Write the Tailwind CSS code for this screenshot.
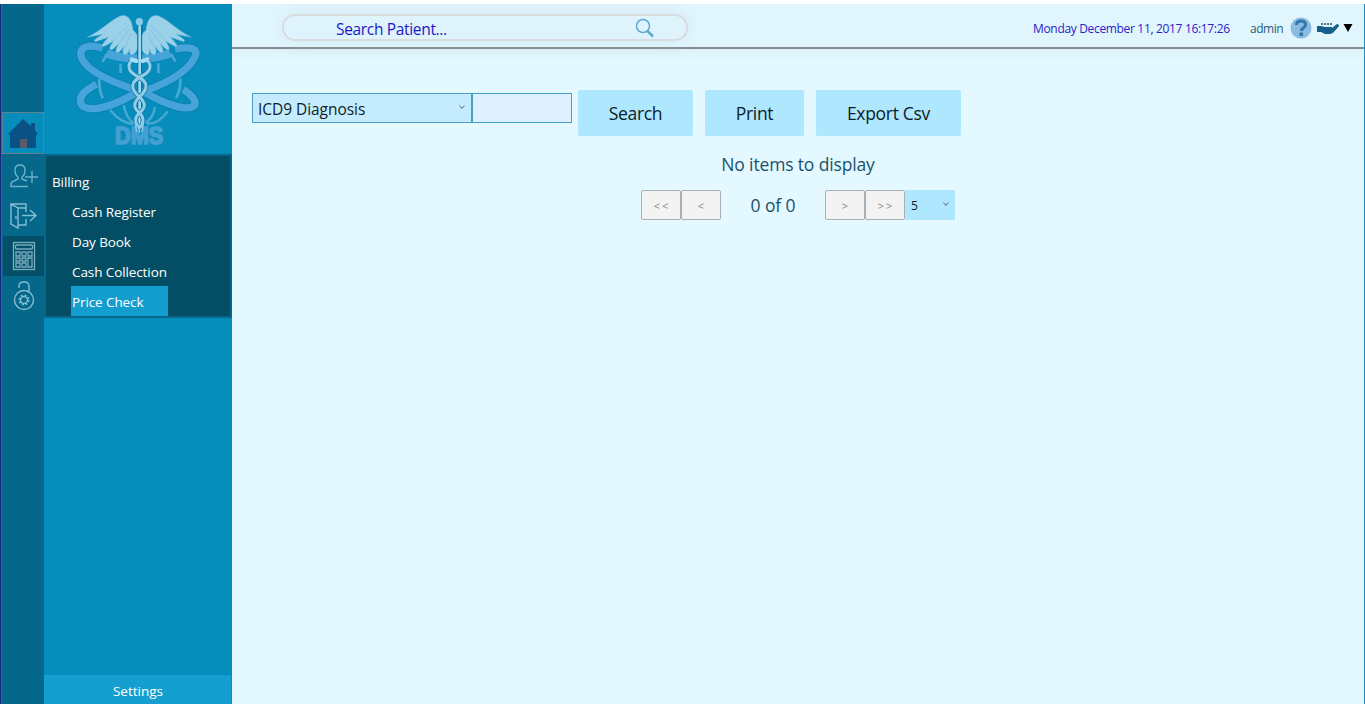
<!DOCTYPE html>
<html lang="en">
<head>
<meta charset="utf-8">
<title>DMS - Price Check</title>
<script src="https://cdn.jsdelivr.net/npm/@tailwindcss/browser@4"></script>
</head>
<body class="h-[704px] w-[1365px] overflow-hidden bg-white pt-1 font-['Open_Sans','Noto_Sans',sans-serif]">
<div class="flex h-[700px] border-l border-[#10297c]">
  <nav class="flex w-[43px] shrink-0 flex-col border-l border-[#0a7ba3] bg-[#056789] pt-[108px]">
    <a class="flex h-[42px] w-[42px] items-center justify-center border border-[#657f8c] bg-[#078dbc]">
      <svg class="h-8 w-8" viewBox="0 0 32 32"><path d="M1 17 16 2l8 7V6h4v7l3 4-2 1v13H3V18Z" fill="#0a5285"/><rect x="13" y="22" width="7" height="9" fill="#5b5c6b"/></svg>
    </a>
    <a class="flex h-[41px] items-center justify-center pt-1 pl-0.5">
      <svg class="h-7 w-8" viewBox="0 0 32 28" fill="none" stroke="#6fb0cc" stroke-width="1.4"><path d="M20 23.500H3v-2.500q0-2 3-3l4-2v-2Q7 12 7 7q0-5 5-5t5 5q0 5-3 7v2l5 2M24 8v12M17 14h13"/></svg>
    </a>
    <a class="flex h-[41px] items-center justify-center pl-0.5">
      <svg class="h-7 w-8" viewBox="0 0 32 28" fill="none" stroke="#83bdd3" stroke-width="1.4"><path d="M3 2h15v8M3 2l7 4v20l-7-4ZM10 6h8M18 2v8M10 23h8v-6M8 14v3M14 13.500h14M22 8l6 5.500-6 5.500"/></svg>
    </a>
    <a class="ml-px flex h-10 items-center justify-center bg-[#044f68]">
      <svg class="h-[30px] w-6" viewBox="0 0 24 30" fill="none" stroke="#78acbf" stroke-width="1.3"><rect x="1.500" y="1.500" width="21" height="27"/><rect x="3.500" y="4" width="17" height="4" rx="1"/><path d="M4 11h4v4H4zm6 0h4v4h-4zm6 0h4v4h-4zM4 17h4v3H4zm6 0h4v3h-4zm6 0h4v9h-4zM4 22h4v4H4zm6 0h4v4h-4z"/></svg>
    </a>
    <a class="flex h-10 items-center justify-center">
      <svg class="h-8 w-8" viewBox="0 0 32 32" fill="none" stroke="#83bdd3" stroke-width="1.4"><circle cx="17" cy="20" r="9.500"/><circle cx="17" cy="20" r="3.500"/><circle cx="17" cy="20" r="4.800" stroke-width="1.600" stroke-dasharray="1.885 1.885"/><path d="M12 8V6q0-4 5-4t5 4v6"/></svg>
    </a>
  </nav>
  <aside class="flex w-[188px] shrink-0 flex-col bg-[#078dbc]">
    <div class="h-[150px]">
      <svg class="h-[150px] w-[188px]" viewBox="132 12 564 450" fill="none">
        <g stroke="#08749f" stroke-width="28" opacity=".45">
          <path d="M308 144C260 130 230 142 247 178C264 211 325 242 398 266M435 278C500 315 560 333 580 319C594 309 581 290 550 268M525 147C570 139 598 144 584 172C561 222 485 259 391 288C316 330 254 337 242 310C235 287 257 270 289 253"/>
        </g>
        <g stroke="#46a4da" stroke-width="22">
          <path d="M308 144C260 130 230 142 247 178C264 211 325 242 398 266M435 278C500 315 560 333 580 319C594 309 581 290 550 268"/>
          <path d="M525 147C570 139 598 144 584 172C561 222 485 259 391 288C316 330 254 337 242 310C235 287 257 270 289 253"/>
          <path d="M320 161Q422 191 511 160" stroke-width="25"/>
        </g>
        <g stroke="#49a9d4" stroke-width="7">
          <path d="M321 161l-13 25M362 191v28M475 190v30M512 161l15 24M298 237q-2 30 10 58M541 236q2 30-13 58" stroke-width="8"/>
          <path d="M331 330q30 39 69 42M371 316q7 39 34 57M503 334q-26 37-62 38M465 321q-6 35-29 48"/>
        </g>
        <g fill="#9bd0e9" stroke="#69b4d8" stroke-width="1.500">
          <path d="M399 91C395 50 376 39 355 51C326 65 312 86 262 112L308 103C292 114 278 120 286 125L325 112Q302 137 307 139Q312 142 340 123Q324 148 332 149Q338 151 356 131Q341 158 354 158Q362 155 372 138Q363 164 376 164Q387 161 389 146Q386 170 402 162Q417 150 414 119Q413 100 399 91Z"/>
          <path d="M438 91C442 50 461 39 482 51C511 65 525 86 574 112L529 103C545 114 559 120 551 125L512 112Q535 137 530 139Q525 142 497 123Q513 148 505 149Q499 151 481 131Q496 158 483 158Q475 155 465 138Q474 164 461 164Q450 161 448 146Q451 170 435 162Q420 150 423 119Q424 100 438 91Z"/>
        </g>
        <path d="M386 75l-46 44M388 88l-31 41M392 101l-16 40M452 75l45 44M450 88l31 41M446 101l15 40" stroke="#77bcdc" stroke-width="2"/>
        <path d="M419 76v310" stroke="#0878a2" stroke-width="15"/>
        <circle cx="418" cy="65" r="11" fill="#8acbea"/><path d="M419 76v310" stroke="#a1d8ef" stroke-width="8"/>
        <g stroke="#147ba8" stroke-width="14"><path d="M405 180Q386 181 387 202C390 230 438 230 438 257C438 287 404 290 404 316C404 337 429 338 429 359Q429 376 418 383M432 180Q451 181 450 202C447 230 398 230 398 257C398 287 433 290 433 316C433 337 407 338 407 359Q407 376 418 383"/></g>
        <g stroke="#92cde8" stroke-width="9" stroke-linecap="round"><path d="M405 180Q386 181 387 202C390 230 438 230 438 257C438 287 404 290 404 316C404 337 429 338 429 359Q429 376 418 383M432 180Q451 181 450 202C447 230 398 230 398 257C398 287 433 290 433 316C433 337 407 338 407 359Q407 376 418 383"/></g>
        <path d="M395 178l14 5M442 178l-14 5" stroke="#a5dcef" stroke-width="12" stroke-linecap="round"/>
        <text x="345" y="431" textLength="145" lengthAdjust="spacingAndGlyphs" fill="#43a0d3" stroke="#43a0d3" stroke-width="5" class="font-['Liberation_Sans',sans-serif] text-[74px] font-bold">DMS</text>
        <path d="M406 372l4 24M418 375v23M430 372l-4 24" stroke="#8bcbe5" stroke-width="4"/>
      </svg>
    </div>
    <div class="h-[164px] border-2 border-[#056789] bg-[#044e65] pt-[10px] text-[13.5px] leading-[32px] tracking-[-0.1px] text-white">
      <div class="h-[30px] pl-1.5">Billing</div>
      <ul class="pl-[25px]">
        <li class="h-[30px] pl-px">Cash Register</li>
        <li class="h-[30px] pl-px">Day Book</li>
        <li class="h-[30px] pl-px">Cash Collection</li>
        <li class="h-[30px] w-[97px] bg-[#139dcf] pl-px">Price Check</li>
      </ul>
    </div>
    <div class="mt-auto h-[29px] border-r border-[#078dbc] bg-[#149fd0] pl-px text-center text-[13.5px] leading-[33px] text-white">Settings</div>
  </aside>
  <main class="flex-1 overflow-hidden border-r border-[#238bc5] bg-[#e4f8ff]">
    <header class="flex h-[45px] items-center border-b-2 border-[#858b8f] bg-[#e1f5fd] pl-[50px] shadow-[0_2px_12px_#b5cbd044]">
      <div class="mt-1 flex h-[27px] w-[406px] items-center justify-between rounded-[13px] border-2 border-[#d9dcdf] bg-[#def3fc] pr-[31px] pl-[52px] shadow-[0_0_16px_#b9d6df55]">
        <span class="pt-1 text-[15.5px] tracking-[-0.33px] whitespace-nowrap text-[#1c18c5]">Search Patient...</span>
        <svg class="h-5 w-5" viewBox="0 0 20 20" fill="none" stroke="#60a9ce"><circle cx="8" cy="8" r="6.500" stroke-width="1.500"/><path d="m12.500 13 5.500 5.500" stroke-width="2.500"/></svg>
      </div>
      <div class="ml-auto flex items-center pt-1 pr-[11px] whitespace-nowrap">
        <span class="w-[197px] pt-0.5 text-[12px] tracking-[-0.33px] text-[#2c23c8]">Monday December 11, 2017 16:17:26</span>
        <span class="ml-[20px] w-[33px] pt-0.5 text-[12px] tracking-[-0.45px] text-[#245f7b]">admin</span>
        <svg class="ml-[7px] h-[22px] w-[22px]" viewBox="0 0 22 22"><circle cx="11" cy="11" r="10.500" fill="#8bbbe0"/><path d="M6.500 8q0-4 4.500-4t4.500 3.500q0 2-2 3.200Q11.500 12 11.500 14" fill="none" stroke="#3476ae" stroke-width="3"/><rect x="9.500" y="15.500" width="3.500" height="3.500" fill="#3476ae"/></svg>
        <svg class="ml-1 h-4 w-[24px]" viewBox="0 0 24 16"><path d="M1 6h4l4 1h7v1l5-4q2 0 2 2l-6 7-3 1H9l-4-2H1Z" fill="#145f8b"/><path d="M5 4h12" stroke="#477f9d" stroke-width="2" stroke-dasharray="2 1"/></svg>
        <svg class="ml-[3px] h-2.5 w-[10px]" viewBox="0 0 10 10"><path d="M.5 1h9L5 9Z" fill="#000"/></svg>
      </div>
    </header>
    <section class="pt-[41px] pl-5">
      <div class="flex items-start">
        <div class="mt-[3px] flex h-[30px] w-[220px] items-center justify-between border border-[#489fc5] bg-[#c4ebfe] pr-[5px] pl-[5px] text-[15.5px] text-[#111d23]"><span class="pt-1 tracking-[-0.05px]">ICD9 Diagnosis</span><svg class="h-2 w-2" viewBox="0 0 8 8" fill="none" stroke="#526c7a"><path d="m1.500 1.500 2.500 3 2.500-3"/></svg></div>
        <div class="mt-[3px] h-[30px] w-[100px] border border-[#489fc5] bg-[#deefff]"></div>
        <button class="ml-1.5 h-[46px] w-[115px] rounded-[2px] bg-[#afe7fe] text-[17.5px] tracking-[-0.3px] text-[#0b1d29]">Search</button>
        <button class="ml-3 h-[46px] w-[99px] rounded-[2px] bg-[#afe7fe] text-[17.5px] tracking-[-0.3px] text-[#0b1d29]">Print</button>
        <button class="ml-3 h-[46px] w-[145px] rounded-[2px] bg-[#afe7fe] text-[17.5px] tracking-[-0.3px] text-[#0b1d29]">Export Csv</button>
      </div>
      <div class="ml-[389px] w-[314px] text-[#1a526c]">
        <p class="h-[54px] pt-[13px] text-center text-[17.5px] leading-[30px] tracking-[-0.15px]">No items to display</p>
        <div class="flex h-[30px]">
          <button class="w-10 rounded-[2px] border border-[#a7afb3] bg-[#f3f3f3] pt-0.5 pl-0.5 text-[11px] tracking-[2px] text-[#89868a]">&lt;&lt;</button>
          <button class="w-10 rounded-[2px] border border-[#a7afb3] bg-[#f3f3f3] pt-0.5 text-[11px] text-[#89868a]">&lt;</button>
          <span class="w-[104px] text-center text-[17.5px] leading-[31px] tracking-[-0.1px]">0 of 0</span>
          <button class="w-10 rounded-[2px] border border-[#a7afb3] bg-[#f3f3f3] pt-0.5 text-[11px] text-[#89868a]">&gt;</button>
          <button class="w-10 rounded-[2px] border border-[#a7afb3] bg-[#f3f3f3] pt-0.5 pl-0.5 text-[11px] tracking-[2px] text-[#89868a]">&gt;&gt;</button>
          <div class="flex w-[50px] items-center justify-between bg-[#afe7fe] pr-[5px] pl-1.5 text-xs text-[#111d23]"><span class="pt-0.5">5</span><svg class="h-2 w-2" viewBox="0 0 8 8" fill="none" stroke="#526c7a"><path d="m1.500 1.500 2.500 3 2.500-3"/></svg></div>
        </div>
      </div>
    </section>
  </main>
</div>
</body>
</html>
